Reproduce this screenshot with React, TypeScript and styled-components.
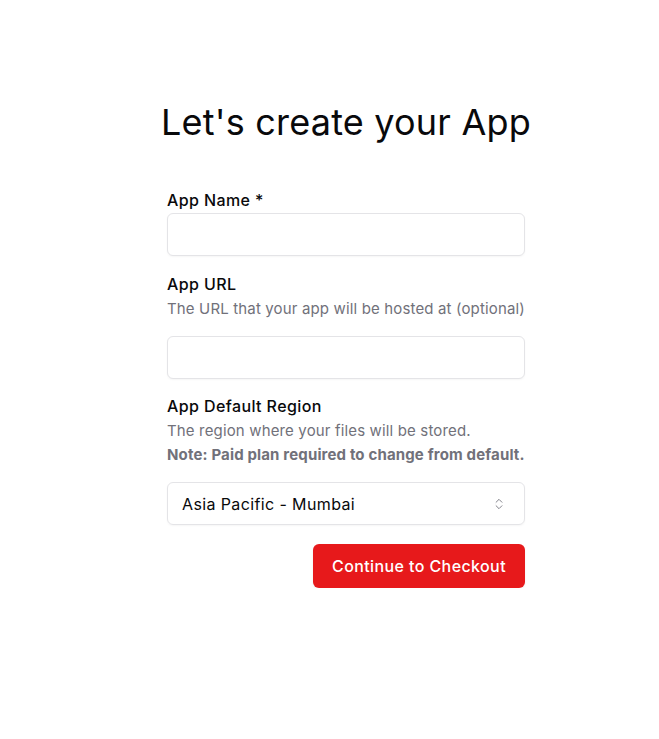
import { FC } from 'react';
import styled, { createGlobalStyle } from 'styled-components';
import { ChevronsUpDown } from 'lucide-react';

const GlobalStyle = createGlobalStyle`
  body {
    margin: 0;
    background: #fff;
    font-family: Inter, "Noto Sans", sans-serif;
    color: #09090b;
  }
`;

const Page = styled.main`
  display: flex;
  justify-content: center;
  padding: 100px 0 0 33px;
`;

const Form = styled.form`
  width: 358px;
  display: flex;
  flex-direction: column;
`;

const Heading = styled.h1`
  align-self: center;
  margin: 0 0 44px;
  font-size: 36px;
  line-height: 44px;
  font-weight: 400;
  letter-spacing: 0.2px;
  text-align: center;
  white-space: nowrap;
`;

const Field = styled.div<{ gap?: number }>`
  display: flex;
  flex-direction: column;
  margin-bottom: ${(p) => p.gap ?? 16}px;
`;

const Label = styled.label`
  font-size: 16px;
  line-height: 24px;
  font-weight: 500;
  letter-spacing: 0.4px;
  margin-bottom: 1px;
`;

const Hint = styled.p<{ strong?: boolean }>`
  margin: 0;
  font-size: 15px;
  line-height: 24px;
  letter-spacing: 0.15px;
  color: #71717a;
  font-weight: ${(p) => (p.strong ? 700 : 400)};
  white-space: nowrap;
`;

const Hints = styled.div`
  margin-bottom: 15px;
`;

const Input = styled.input`
  box-sizing: border-box;
  width: 100%;
  height: 43px;
  border: 1px solid #e4e4e7;
  border-radius: 6px;
  box-shadow: 0 1px 2px rgba(0, 0, 0, 0.04);
  padding: 0 14px;
  font: inherit;
  outline: none;
`;

const Select = styled.div`
  box-sizing: border-box;
  height: 43px;
  border: 1px solid #e4e4e7;
  border-radius: 6px;
  box-shadow: 0 1px 2px rgba(0, 0, 0, 0.04);
  padding: 0 18px 0 14px;
  display: flex;
  align-items: center;
  justify-content: space-between;
  font-size: 16px;
  letter-spacing: 0.38px;
  color: #09090b;

  svg {
    color: #71717a;
  }
`;

const Actions = styled.div`
  display: flex;
  justify-content: flex-end;
  margin-top: 3px;
`;

const Button = styled.button`
  height: 44px;
  padding: 0 19px;
  border: none;
  border-radius: 6px;
  background: #e7191b;
  color: #fff;
  font-family: inherit;
  font-size: 16px;
  font-weight: 500;
  letter-spacing: 0.4px;
  box-shadow: 0 1px 2px rgba(0, 0, 0, 0.08);
  cursor: pointer;
`;

const App: FC = () => (
  <>
    <GlobalStyle />
    <Page>
      <Form onSubmit={(e) => e.preventDefault()}>
        <Heading>Let's create your App</Heading>
        <Field>
          <Label>App Name *</Label>
          <Input />
        </Field>
        <Field gap={15}>
          <Label>App URL</Label>
          <Hints>
            <Hint>The URL that your app will be hosted at (optional)</Hint>
          </Hints>
          <Input />
        </Field>
        <Field>
          <Label>App Default Region</Label>
          <Hints>
            <Hint>The region where your files will be stored.</Hint>
            <Hint strong>Note: Paid plan required to change from default.</Hint>
          </Hints>
          <Select>
            <span>Asia Pacific - Mumbai</span>
            <ChevronsUpDown size={14} strokeWidth={1.5} />
          </Select>
        </Field>
        <Actions>
          <Button type="submit">Continue to Checkout</Button>
        </Actions>
      </Form>
    </Page>
  </>
);

export default App;
